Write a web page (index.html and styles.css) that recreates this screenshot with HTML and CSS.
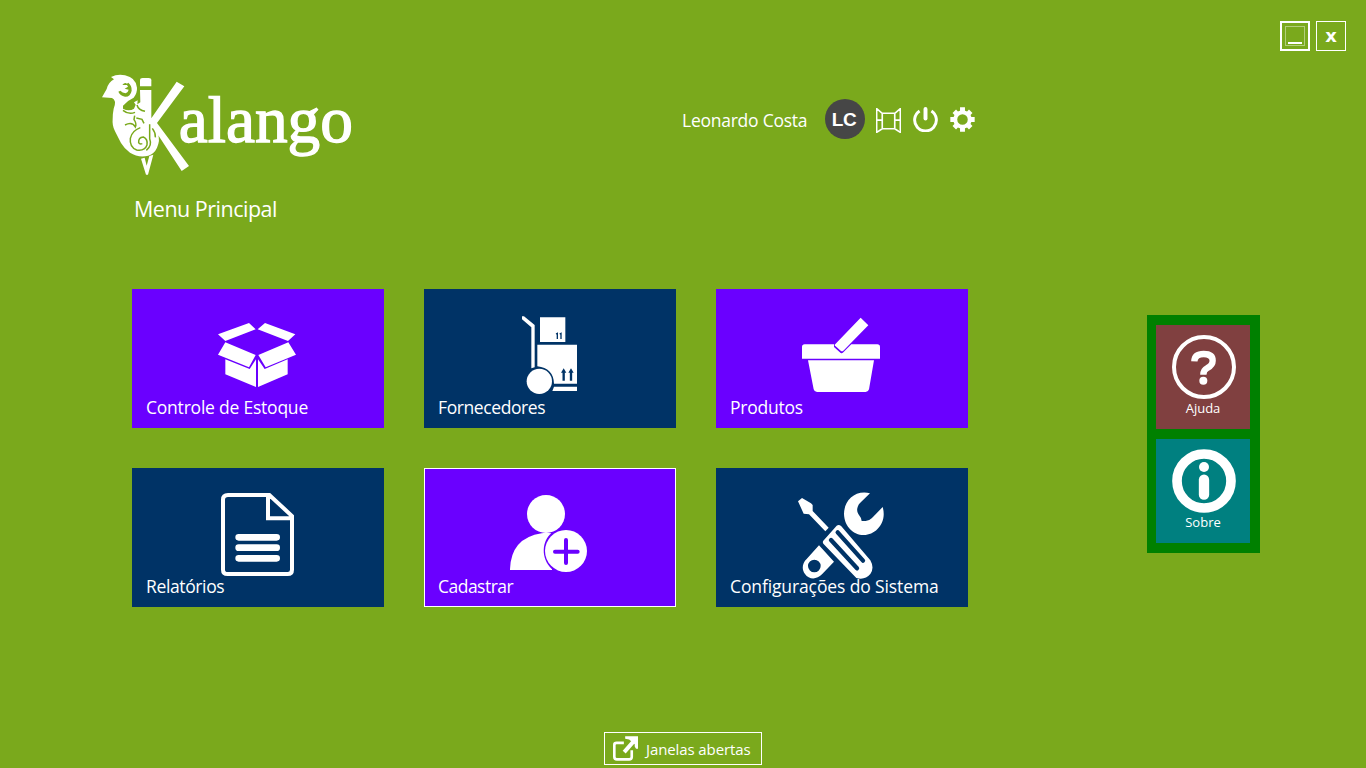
FILE: index.html
```html
<!DOCTYPE html>
<html lang="pt-BR">
<head>
<meta charset="utf-8">
<title>Kalango</title>
<link rel="stylesheet" href="styles.css">
</head>
<body>
<div class="window">
  <div class="window-controls">
    <button class="control control-min" aria-label="Minimizar"><span class="focus"><span class="dash"></span></span></button>
    <button class="control control-close">x</button>
  </div>
  <header class="header">
    <svg class="logo" viewBox="21 30 750 300">
      <path class="w" d="M21 97L35 72Q40 52 57 43L48 36Q68 26 90 31Q123 38 126 68Q127 84 116 98Q96 107 84 122L84 131Q102 140 117 131L122 119L117 112L128 106L127 118L136 112L135 75H169V160L245 50L268 64L186 174L282 303L260 318L176 190L189 208Q196 226 186 248Q178 266 160 272Q130 279 105 263Q88 251 78 234Q68 215 60 199Q51 182 53 162Q53 145 56 131Q66 105 51 99Z"/>
      <path class="w" d="M135 46Q135 39 143 39H161Q169 39 169 46V64H135Z"/>
      <path class="w" d="M138 281L149 278L155 302L163 273L175 269L159 329H153Z"/>
      <path class="g" d="M82 60Q89 51 96 56L100 53Q111 62 110 77Q106 96 90 95Q75 92 70 80L76 77Q82 84 92 85Q99 83 101 74L89 71L99 65L96 60Z"/>
      <path class="l" d="M135 68H169M84 136Q101 150 120 142M126 120Q130 135 150 139M90 180Q112 169 121 186Q126 176 117 164L119 152M124 159L141 163L147 175M136 188Q111 197 106 220Q103 246 125 255Q149 259 156 240Q159 222 145 216Q130 217 131 233Q134 239 142 236M164 178V221Q172 241 154 256M172 190Q182 203 181 217"/>
      <text class="brand" x="251" y="232" textLength="523">alango</text>
    </svg>
    <div class="user">
      <span class="user-name">Leonardo Costa</span>
      <span class="avatar">LC</span>
      <svg class="tool" viewBox="618 68 76 76"><path class="s4" d="M620 70L637 84V131L620 142ZM692 70L675 84V131L692 142ZM637 84H675M637 131H675M620 105H637M675 105H692"/></svg>
      <svg class="tool" viewBox="728 65 76 76"><path class="s9" d="M748 77A33 33 0 1 0 784 77"/><path d="M766 71V100" class="s10"/></svg>
      <svg class="tool" viewBox="839 65 76 76"><circle cx="877" cy="103" r="22" class="s12"/><path class="s16" d="M877 79V66M877 127V140M853 103H840M901 103H914M860 86L852 78M894 86L902 78M860 120L852 128M894 120L902 128"/></svg>
    </div>
  </header>
  <h1 class="title"><span>Menu Principal</span></h1>
  <div class="content">
    <main class="tiles">
      <a class="tile violet"><svg viewBox="0 0 330 285" class="i-box"><path class="w" d="M39 88L132 54L152 73L61 108ZM158 73L180 54L271 88L249 108ZM61 112L152 150L132 187L39 149ZM250 112L273 149L182 187L160 150ZM61 163L134 192L153 163V246L61 208ZM159 163L179 192L248 163V208L159 246Z"/></svg><span class="t1">Controle de Estoque</span></a>
      <a class="tile navy"><svg viewBox="0 0 270 285" class="i-cart"><path class="w" d="M51 34H57L89 60V187L79 190V67L51 43ZM105 37H181V111H105ZM97 119H216V236H147Q145 189 97 184ZM147 245H216V258H142Z"/><circle class="w" cx="103" cy="229" r="38"/><path class="n3" d="M153 87L157 85V102M164 87L168 85V102"/><path class="n6" d="M176 227V200M198 227V200"/><path class="nf" d="M168 203L176 190L184 203ZM190 203L198 190L206 203Z"/></svg><span class="t2">Fornecedores</span></a>
      <a class="tile violet"><svg viewBox="0 0 330 285" class="i-basket"><path class="w" d="M36 161V126Q36 118 44 118H132V126L152 144Q156 146 160 142L184 118H262Q270 118 270 126V161ZM54 166H252L237 253Q235 261 227 261H81Q73 261 71 253ZM134 119L212 38L235 61L160 137Q156 141 152 137L137 124Q134 122 134 119Z"/></svg><span class="t3">Produtos</span></a>
      <a class="tile navy"><svg viewBox="0 0 330 360" class="i-doc"><path class="s12" d="M69 45H193L261 108V269Q261 282 248 282H68Q54 282 54 269V59Q54 45 69 45ZM189 46V115H260"/><path class="s20" d="M101 172H215M101 203H215M101 235H215"/></svg><span class="t4">Relatórios</span></a>
      <a class="tile violet selected"><svg viewBox="0 0 330 300" class="i-person"><circle class="w" cx="138" cy="102" r="57"/><path class="w" d="M30 268Q33 174 125 160Q137 156 154 160C126 183 121 234 156 268ZM30 267H156V270H30Z"/><circle class="w" cx="198" cy="213" r="63"/><path class="v12" d="M198 180V249M165 215H233"/></svg><span class="t5">Cadastrar</span></a>
      <a class="tile navy"><svg viewBox="0 0 360 330" class="i-tools"><path class="w" d="M54 64L66 54L93 70L98 75V93L146 143L136 154L87 103L71 101ZM270 40C225 29 192 62 192 102C193 141 222 166 252 165C287 165 322 128 308 81L276 114Q267 123 257 123H245Q244 113 235 102Q229 92 233 81Q235 74 240 69ZM117 196L162 245L126 283C109 301 86 298 75 282C64 267 67 249 80 237ZM103 239A19 19 0 1 0 103 277A19 19 0 1 0 103 239ZM170 137Q177 132 184 139L271 241Q284 264 271 282Q255 301 229 294L130 191Q126 185 132 180Z"/><path class="n11" d="M173 157L249 242M153 180L231 265"/><path class="w2" d="M166 171L240 254"/></svg><span class="t6">Configurações do Sistema</span></a>
    </main>
    <aside class="side">
      <a class="mini help"><svg viewBox="96 75 192 192"><circle class="s12" cx="192" cy="171" r="90"/><path class="q" d="M163 154Q164 132 191 132Q218 132 218 152Q218 165 202 174Q190 180 190 194"/><circle class="w" cx="190" cy="212" r="12"/></svg><span class="t7">Ajuda</span></a>
      <a class="mini about"><svg viewBox="96 417 192 192"><circle class="s29" cx="192" cy="513" r="81"/><circle class="w" cx="192" cy="471" r="15"/><path class="s31" d="M192 509V554"/></svg><span class="t8">Sobre</span></a>
    </aside>
  </div>
  <footer class="footer">
    <button class="open-windows"><svg viewBox="54 33 76 76"><path class="s8" d="M87 54H65Q58 54 58 60V96Q58 104 66 104H103Q111 104 111 97V76"/><path class="s10b" d="M88 82L116 50"/><path class="w" d="M91 34H130V72H124L120 65V58L103 44L91 41Z"/></svg><span class="t9">Janelas abertas</span></button>
  </footer>
</div>
</body>
</html>
```
FILE: styles.css
```css
* { box-sizing: border-box; }
body { margin: 0; background: #7aa91c; color: #fff; font-family: "Open Sans", sans-serif; }
button { padding: 0; background: transparent; color: #fff; font-family: inherit; }
svg { display: block; }
svg path, svg circle { fill: none; }
svg .w { fill: #fff; }
svg .g { fill: #7aa91c; }
svg .nf { fill: #003366; }
.l { stroke: #7aa91c; stroke-width: 4.5; }
.s4, .s8, .s9, .s10, .s10b, .s12, .s16, .s20, .s29, .s31, .q, .w2 { stroke: #fff; }
.s4 { stroke-width: 5; }
.s8 { stroke-width: 8; }
.s9 { stroke-width: 9; }
.s10 { stroke-width: 12; stroke-linecap: round; }
.s10b { stroke-width: 12; }
.s12 { stroke-width: 12; }
.s16 { stroke-width: 15; }
.s20 { stroke-width: 20; stroke-linecap: round; }
.s29 { stroke-width: 29; }
.s31 { stroke-width: 31; stroke-linecap: round; }
.q { stroke-width: 19; }
.w2 { stroke-width: 9; }
.n3, .n6, .n11 { stroke: #003366; }
.n3 { stroke-width: 4; }
.n6 { stroke-width: 7; }
.n11 { stroke-width: 13; stroke-linecap: round; }
.v12 { stroke: #6a00ff; stroke-width: 12; stroke-linecap: round; }

.window { width: 1366px; height: 768px; display: flex; flex-direction: column; overflow: hidden; }
.window-controls { display: flex; justify-content: flex-end; gap: 6px; padding: 21px 20px 0 0; }
.control { width: 30px; height: 30px; border: 1px solid #fff; font: bold 18px/26px "DejaVu Sans", sans-serif; }
.control-min { border-width: 2px; padding: 3px; }
.focus { display: flex; height: 20px; border: 1px solid #b3ce7b; align-items: flex-end; justify-content: center; padding-bottom: 1px; }
.dash { width: 14px; height: 2px; background: #fff; }
.header { display: flex; align-items: flex-start; justify-content: space-between; height: 100px; margin-top: 24px; padding: 0 391px 0 102px; }
.logo { width: 250px; height: 100px; overflow: visible; }
.brand { font: 196px "Liberation Serif", serif; fill: #fff; stroke: #fff; stroke-width: 4; }
.user { display: flex; align-items: center; height: 40px; margin-top: 24px; }
.user-name { width: 143px; font-size: 17.5px; letter-spacing: -.25px; line-height: 24px; margin-top: 2px; white-space: nowrap; }
.avatar { width: 40px; height: 40px; margin-right: 11px; padding-right: 2px; border-radius: 50%; background: #464646; font: bold 19px/41px "Liberation Sans", sans-serif; text-align: center; letter-spacing: -.4px; }
.tool { width: 25px; height: 25px; margin: 1px 12px 0 0; }
.tool:nth-of-type(1) { margin-top: 3px; }
.tool:last-child { margin-right: 0; }
.title { margin: 19px 0 0 134px; font-size: 21.5px; font-weight: 400; letter-spacing: -.5px; line-height: 30px; }
.content { display: flex; align-items: flex-start; justify-content: space-between; padding: 65px 106px 0 132px; }
.tiles { display: grid; grid-template-columns: repeat(3, 252px); grid-auto-rows: 139px; gap: 40px; }
.tile { display: grid; border: 1px solid transparent; }
.tile > * { grid-area: 1 / 1; }
.tile span { align-self: end; margin: 0 0 8px 13px; font-size: 17.5px; line-height: 24px; white-space: nowrap; }
.t1 { letter-spacing: -.22px; }
.t2 { letter-spacing: -.4px; }
.t3 { letter-spacing: -.24px; }
.t4 { letter-spacing: -.37px; }
.t5 { letter-spacing: -.52px; }
.t6 { letter-spacing: -.12px; }
.violet { background-color: #6a00ff; }
.navy { background-color: #003366; }
.selected { border-color: #fff; }
.i-box { width: 110px; height: 95px; margin: 15px 0 0 72px; }
.i-cart { width: 90px; height: 95px; margin: 15px 0 0 80px; }
.i-basket { width: 110px; height: 95px; margin: 15px 0 0 73px; }
.i-doc { width: 110px; height: 120px; margin: 11px 0 0 72px; }
.i-person { width: 110px; height: 100px; margin: 11px 0 0 75px; }
.i-tools { width: 120px; height: 110px; margin: 11px 0 0 63px; }
.side { display: flex; flex-direction: column; gap: 10px; width: 113px; height: 238px; margin-top: 26px; padding: 10px 10px 10px 9px; background: #008000; }
.mini { display: flex; flex-direction: column; align-items: center; height: 104px; padding-top: 10px; }
.mini svg { width: 64px; height: 64px; margin-left: 2px; }
.mini span { font-size: 13px; line-height: 18px; }
.help { background: #804040; }
.about { background: #008080; }
.footer { display: flex; justify-content: center; margin-top: auto; padding-bottom: 3px; }
.open-windows { display: flex; align-items: center; width: 158px; height: 33px; padding-left: 8px; border: 1px solid #fff; gap: 8px; }
.open-windows svg { width: 25px; height: 25px; }
.open-windows span { font-size: 15px; letter-spacing: -.1px; line-height: 20px; white-space: nowrap; }
```
